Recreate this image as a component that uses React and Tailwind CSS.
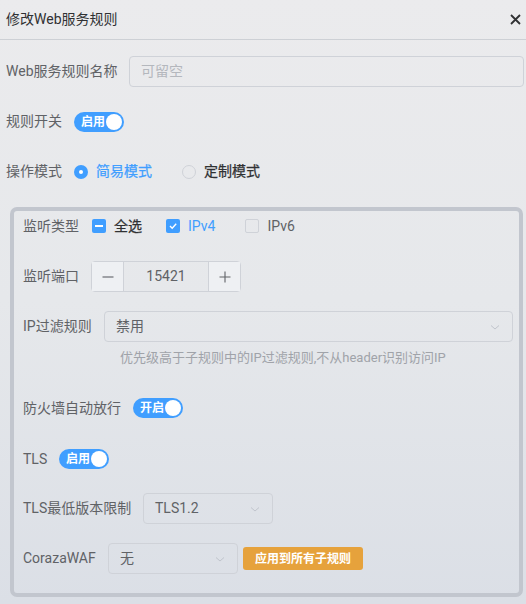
import React from "react";

const font = { fontFamily: 'Roboto, "Noto Sans CJK SC", sans-serif' };

function Toggle({ text }) {
  return (
    <div className="relative flex h-[20px] w-[50px] shrink-0 items-center rounded-full bg-[#409eff] pl-[7px]">
      <span className="text-[12px] font-bold leading-none text-white">{text}</span>
      <span className="absolute right-[2px] top-[2px] h-[16px] w-[16px] rounded-full bg-white" />
    </div>
  );
}

function Chevron() {
  return (
    <svg width="12" height="12" viewBox="0 0 12 12" className="text-[#c0c4cc]">
      <path d="M2 4.5 L6 8 L10 4.5" fill="none" stroke="currentColor" strokeWidth="1" />
    </svg>
  );
}

function Select({ value, w }) {
  return (
    <div className={`flex h-[31px] ${w} shrink-0 items-center justify-between rounded-[4px] border border-[#cfd2d8] pl-[11px] pr-[11px]`}>
      <span className="text-[14px] text-[#606266]">{value}</span>
      <Chevron />
    </div>
  );
}

function Box({ children, className = "" }) {
  return (
    <span className={`flex h-[14px] w-[14px] shrink-0 items-center justify-center rounded-[2px] ${className}`}>
      {children}
    </span>
  );
}

export default function App() {
  return (
    <div
      style={font}
      className="h-[604px] w-[526px] overflow-hidden bg-gradient-to-b from-[#ebebed] via-[#e6e8eb] to-[#dbdfe6] text-[14px] text-[#606266]"
    >
      {/* header */}
      <div className="flex h-[40px] items-center justify-between border-b border-[#cdd0d5] pl-[6px] pr-[5px]">
        <span className="text-[14px] text-[#303133]">修改Web服务规则</span>
        <svg width="11" height="11" viewBox="0 0 11 11">
          <path d="M1 1 L10 10 M10 1 L1 10" stroke="#303133" strokeWidth="1.8" />
        </svg>
      </div>

      <div className="pl-[6px] pr-[2px]">
        {/* name */}
        <div className="mt-[16px] flex h-[31px] items-center">
          <span className="w-[123px] shrink-0">Web服务规则名称</span>
          <div className="flex h-[31px] flex-1 items-center rounded-[4px] border border-[#cfd2d8] pl-[11px] text-[#b4b7bd]">
            可留空
          </div>
        </div>

        {/* switch */}
        <div className="mt-[19px] flex h-[31px] items-center">
          <span className="w-[68px] shrink-0">规则开关</span>
          <Toggle text="启用" />
        </div>

        {/* mode */}
        <div className="mt-[19px] flex h-[31px] items-center">
          <span className="w-[68px] shrink-0">操作模式</span>
          <span className="flex h-[14px] w-[14px] items-center justify-center rounded-full bg-[#409eff]">
            <span className="h-[4px] w-[4px] rounded-full bg-white" />
          </span>
          <span className="ml-[8px] text-[#409eff] [-webkit-text-stroke:0.25px_#409eff]">简易模式</span>
          <span className="ml-[30px] h-[14px] w-[14px] rounded-full border border-[#cfd2d8]" />
          <span className="ml-[8px] text-[#303133] [-webkit-text-stroke:0.25px_#303133]">定制模式</span>
        </div>
      </div>

      {/* inner box */}
      <div className="ml-[10px] mr-[3px] mt-[20px] h-[390px] rounded-[7px] border-4 border-[#c2c6ce] pl-[9px] pr-[6px]">
        {/* listen type */}
        <div className="flex h-[30px] items-center">
          <span className="w-[69px] shrink-0">监听类型</span>
          <Box className="bg-[#409eff]">
            <span className="h-[2px] w-[8px] bg-white" />
          </Box>
          <span className="ml-[8px] text-[#303133] [-webkit-text-stroke:0.25px_#303133]">全选</span>
          <Box className="ml-[24px] bg-[#409eff]">
            <svg width="10" height="10" viewBox="0 0 10 10">
              <path d="M2 5 L4.2 7.2 L8.2 2.8" fill="none" stroke="white" strokeWidth="1.4" />
            </svg>
          </Box>
          <span className="ml-[8px] text-[#409eff]">IPv4</span>
          <Box className="ml-[30px] border border-[#cfd2d8]" />
          <span className="ml-[8px]">IPv6</span>
        </div>

        {/* port */}
        <div className="mt-[20px] flex h-[31px] items-center">
          <span className="w-[68px] shrink-0">监听端口</span>
          <div className="flex h-[31px] w-[150px] rounded-[4px] border border-[#cfd2d8]">
            <div className="flex w-[32px] items-center justify-center border-r border-[#cfd2d8] bg-[#eef0f3] text-[#606266]">
              <svg width="12" height="12" viewBox="0 0 12 12">
                <path d="M0.5 6 H11.5" stroke="#606266" strokeWidth="1.1" />
              </svg>
            </div>
            <div className="flex flex-1 items-center justify-center">15421</div>
            <div className="flex w-[32px] items-center justify-center border-l border-[#cfd2d8] bg-[#eef0f3]">
              <svg width="12" height="12" viewBox="0 0 12 12">
                <path d="M0.5 6 H11.5 M6 0.5 V11.5" stroke="#606266" strokeWidth="1.1" />
              </svg>
            </div>
          </div>
        </div>

        {/* ip filter */}
        <div className="mt-[19px] flex h-[31px] items-center">
          <span className="w-[81px] shrink-0">IP过滤规则</span>
          <Select value="禁用" w="w-[409px]" />
        </div>
        <div className="mt-[7px] pl-[97px] text-[13px] leading-[18px] text-[#a0a3a9]">
          优先级高于子规则中的IP过滤规则,不从header识别访问IP
        </div>

        {/* firewall */}
        <div className="mt-[25px] flex h-[32px] items-center">
          <span className="w-[110px] shrink-0">防火墙自动放行</span>
          <Toggle text="开启" />
        </div>

        {/* TLS */}
        <div className="mt-[19px] flex h-[32px] items-center">
          <span className="w-[36px] shrink-0">TLS</span>
          <Toggle text="启用" />
        </div>

        {/* TLS min */}
        <div className="mt-[18px] flex h-[31px] items-center">
          <span className="w-[120px] shrink-0">TLS最低版本限制</span>
          <Select value="TLS1.2" w="w-[130px]" />
        </div>

        {/* coraza */}
        <div className="mt-[19px] flex h-[31px] items-center">
          <span className="w-[85px] shrink-0">CorazaWAF</span>
          <Select value="无" w="w-[130px]" />
          <div className="ml-[5px] flex h-[23px] w-[120px] items-center justify-center rounded-[3px] bg-[#e6a23c] text-[12px] font-bold text-white">
            应用到所有子规则
          </div>
        </div>
      </div>
    </div>
  );
}
